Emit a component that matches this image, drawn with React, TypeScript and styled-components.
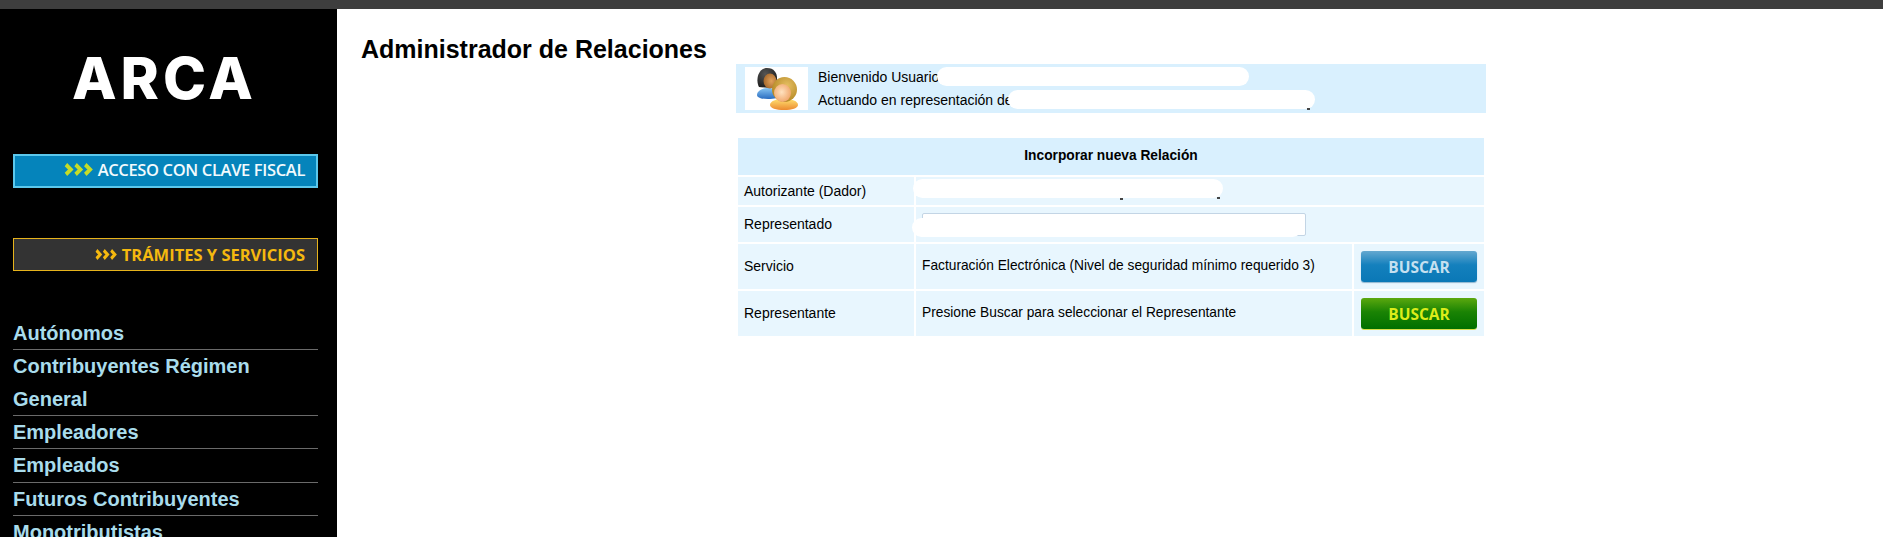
import React from "react"
import styled, { createGlobalStyle } from "styled-components"

const GlobalStyle = createGlobalStyle`
  html, body {
    margin: 0;
    height: 100%;
    overflow: hidden;
    background: #fff;
    font-family: "Liberation Sans", Arial, sans-serif;
  }
`

const Page = styled.div`
  height: 537px;
  display: flex;
  flex-direction: column;
  overflow: hidden;
`

const TopBar = styled.div`
  height: 9px;
  flex: none;
  background: #3e3e3e;
`

const Body = styled.div`
  flex: 1;
  min-height: 0;
  display: flex;
`

const Sidebar = styled.aside`
  width: 337px;
  flex: none;
  box-sizing: border-box;
  padding: 0 19px 0 13px;
  background: #000;
  overflow: hidden;
`

const Logo = styled.div`
  height: 145px;
  box-sizing: border-box;
  padding: 37px 2px 0 0;
  text-align: center;
  color: #fff;
  font-family: Inter, sans-serif;
  font-weight: 800;
  font-size: 58px;
  line-height: 64px;
  letter-spacing: 4px;
`

const SideButton = styled.a<{ $variant: "blue" | "dark" }>`
  display: flex;
  align-items: center;
  justify-content: flex-end;
  box-sizing: border-box;
  height: ${({ $variant }) => ($variant === "blue" ? "34px" : "33px")};
  font-family: "Open Sans", sans-serif;
  white-space: nowrap;
  ${({ $variant }) =>
    $variant === "blue"
      ? `
    gap: 5px;
    padding: 0 11px 3px 0;
    font-weight: 600;
    font-size: 16.5px;
    letter-spacing: -0.35px;
    border: 2px solid #5cc8ec;
    background: #0584bb;
    color: #f2fafd;
    margin-bottom: 50px;
  `
      : `
    gap: 5px;
    padding: 0 12px 0 0;
    font-weight: 700;
    font-size: 16.5px;
    letter-spacing: 0;
    border: 1px solid #e6b31c;
    background: #333333;
    color: #f5b90f;
  `}
`

const Chevrons = styled.svg`
  flex: none;
`

const Menu = styled.ul`
  list-style: none;
  margin: 46px 0 0;
  padding: 0;
`

const MenuItem = styled.li`
  border-bottom: 1px solid #6a6a6a;
  color: #a9dcec;
  font-weight: 700;
  font-size: 20px;
  line-height: 32.33px;
`

const Main = styled.main`
  flex: 1;
  min-width: 0;
  display: flex;
  flex-direction: column;
`

const Title = styled.h1`
  margin: 26px 0 0 24px;
  height: 29px;
  color: #000;
  font-size: 25px;
  line-height: 29px;
  font-weight: 700;
`

const Content = styled.div`
  width: 750px;
  align-self: center;
  margin-left: 2px;
`

const Welcome = styled.div`
  display: flex;
  align-items: center;
  height: 49px;
  padding-left: 9px;
  background: #d9f0fe;
`

const IconBox = styled.div`
  width: 63px;
  height: 43px;
  flex: none;
  background: #fff;
  display: flex;
`

const WelcomeText = styled.div`
  margin-left: 10px;
  color: #000;
  font-size: 14px;
  line-height: 24px;
`

const WelcomeLine = styled.div`
  position: relative;
  white-space: nowrap;

  & + & {
    margin-top: -1px;
  }
`

const Redaction = styled.span<{ $left: number; $top: number; $width: number }>`
  position: absolute;
  left: ${({ $left }) => $left}px;
  top: ${({ $top }) => $top}px;
  width: ${({ $width }) => $width}px;
  height: 19px;
  border-radius: 10px;
  background: #fff;
`

const Residue = styled.span<{ $left: number; $top: number }>`
  position: absolute;
  left: ${({ $left }) => $left}px;
  top: ${({ $top }) => $top}px;
  width: 3px;
  height: 2px;
  background: #444;
`

const Table = styled.table`
  width: 750px;
  margin-top: 23px;
  border-collapse: separate;
  border-spacing: 2px;
  table-layout: fixed;
  color: #000;
  font-size: 14px;
`

const HeaderCell = styled.th`
  height: 37px;
  padding: 0 0 2px;
  box-sizing: border-box;
  background: #d9f0fe;
  font-size: 13.75px;
  font-weight: 700;
  text-align: center;
`

const Cell = styled.td<{ $height: number; $value?: boolean }>`
  position: relative;
  height: ${({ $height }) => $height}px;
  padding: 0 0 ${({ $height }) => ($height > 28 ? "2px" : "0")} 6px;
  box-sizing: border-box;
  background: #e8f6fe;
  white-space: nowrap;
  font-size: ${({ $value }) => ($value ? "13.75px" : "14px")};
`

const ButtonCell = styled.td`
  padding: 0;
  background: #e8f6fe;
  text-align: center;
`

const LookupInput = styled.div`
  position: absolute;
  left: 6px;
  top: 6px;
  box-sizing: border-box;
  width: 384px;
  height: 23px;
  border: 1px solid #c3d5e5;
  border-radius: 2px;
  background: #fff;
`

const SearchButton = styled.button<{ $variant: "blue" | "green" }>`
  display: block;
  width: 116px;
  height: 31px;
  margin: 0 auto;
  padding: 0;
  border: 0;
  border-radius: 3px;
  font-family: "Open Sans", sans-serif;
  font-weight: 700;
  font-size: 15.5px;
  letter-spacing: 0;
  color: ${({ $variant }) => ($variant === "blue" ? "#c6e0f0" : "#dcec1a")};
  background: ${({ $variant }) =>
    $variant === "blue"
      ? "linear-gradient(#64a8d0, #1480bd 45%, #0a78b6)"
      : "linear-gradient(#5ba80e, #1a8304 45%, #006f00)"};
  box-shadow: ${({ $variant }) => ($variant === "blue" ? "0 1px 1px #8fb6cf" : "0 1px 0 #d7e04a")};
`

const menuItems = [
  "Autónomos",
  "Contribuyentes Régimen General",
  "Empleadores",
  "Empleados",
  "Futuros Contribuyentes",
  "Monotributistas",
]

const UsersIcon = () => (
  <svg width="63" height="43" viewBox="0 0 63 43">
    <defs>
      <radialGradient id="faceBack" cx="0.6" cy="0.5" r="0.6">
        <stop offset="0" stopColor="#e2a25c" />
        <stop offset="1" stopColor="#a5682c" />
      </radialGradient>
      <radialGradient id="faceFront" cx="0.45" cy="0.45" r="0.6">
        <stop offset="0" stopColor="#ffe2c0" />
        <stop offset="1" stopColor="#f0a468" />
      </radialGradient>
      <linearGradient id="shirtBlue" x1="0" y1="0" x2="0" y2="1">
        <stop offset="0" stopColor="#86c4f2" />
        <stop offset="1" stopColor="#2a6cc0" />
      </linearGradient>
      <linearGradient id="shirtOrange" x1="0" y1="0" x2="0" y2="1">
        <stop offset="0" stopColor="#ffe070" />
        <stop offset="1" stopColor="#ec8a30" />
      </linearGradient>
      <radialGradient id="hairBlond" cx="0.6" cy="0.35" r="0.7">
        <stop offset="0" stopColor="#e6bf62" />
        <stop offset="1" stopColor="#b08420" />
      </radialGradient>
      <radialGradient id="hairDark" cx="0.4" cy="0.3" r="0.7">
        <stop offset="0" stopColor="#555" />
        <stop offset="1" stopColor="#1e1e1e" />
      </radialGradient>
    </defs>
    <path d="M12 28c0-4 5-7 11-7s12 2 12 6c0 4-6 5-12 5-6 0-11-1-11-4z" fill="url(#shirtBlue)" />
    <path d="M14 20C10 12 14 1 22 1c7 0 10 5 10 10 0 5-3 10-6 10z" fill="url(#hairDark)" />
    <ellipse cx="25" cy="14" rx="6.5" ry="7.5" fill="url(#faceBack)" />
    <path d="M25 38c0-4 6-6 14-6s14 2 14 6c0 3-6 5-14 5s-14-2-14-5z" fill="url(#shirtOrange)" />
    <ellipse cx="39.5" cy="22.5" rx="12.5" ry="12.5" fill="url(#hairBlond)" />
    <ellipse cx="37.5" cy="26" rx="8.5" ry="9" fill="url(#faceFront)" />
  </svg>
)

const SideChevrons = ({ color, width, height }: { color: string; width: number; height: number }) => (
  <Chevrons width={width} height={height} viewBox="0 0 30 12" preserveAspectRatio="none">
    <g fill="none" stroke={color} strokeWidth="3.8">
      <path d="M2 1.5 7 6l-5 4.5" />
      <path d="M12 1.5 17 6l-5 4.5" />
      <path d="M22 1.5 27 6l-5 4.5" />
    </g>
  </Chevrons>
)

const App = () => (
  <Page>
    <GlobalStyle />
    <TopBar />
    <Body>
      <Sidebar>
        <Logo>ARCA</Logo>
        <SideButton $variant="blue">
          <SideChevrons color="#c5dc28" width={29} height={13} />
          ACCESO CON CLAVE FISCAL
        </SideButton>
        <SideButton $variant="dark">
          <SideChevrons color="#f5b90f" width={22} height={11} />
          TRÁMITES Y SERVICIOS
        </SideButton>
        <Menu>
          {menuItems.map((item) => (
            <MenuItem key={item}>{item}</MenuItem>
          ))}
        </Menu>
      </Sidebar>
      <Main>
        <Title>Administrador de Relaciones</Title>
        <Content>
          <Welcome>
            <IconBox>
              <UsersIcon />
            </IconBox>
            <WelcomeText>
              <WelcomeLine>
                Bienvenido Usuario
                <Redaction $left={119} $top={2} $width={312} />
              </WelcomeLine>
              <WelcomeLine>
                Actuando en representación de
                <Redaction $left={190} $top={2} $width={307} />
                <Residue $left={489} $top={20} />
              </WelcomeLine>
            </WelcomeText>
          </Welcome>
          <Table>
            <colgroup>
              <col style={{ width: 176 }} />
              <col />
              <col style={{ width: 130 }} />
            </colgroup>
            <thead>
              <tr>
                <HeaderCell colSpan={3}>Incorporar nueva Relación</HeaderCell>
              </tr>
            </thead>
            <tbody>
              <tr>
                <Cell $height={28}>Autorizante (Dador)</Cell>
                <Cell $height={28} colSpan={2}>
                  <Redaction $left={-3} $top={2} $width={310} />
                  <Residue $left={204} $top={21} />
                  <Residue $left={301} $top={20} />
                </Cell>
              </tr>
              <tr>
                <Cell $height={35}>Representado</Cell>
                <Cell $height={35} colSpan={2}>
                  <LookupInput />
                  <Redaction $left={-4} $top={11} $width={390} />
                </Cell>
              </tr>
              <tr>
                <Cell $height={45}>Servicio</Cell>
                <Cell $height={45} $value>
                  Facturación Electrónica (Nivel de seguridad mínimo requerido 3)
                </Cell>
                <ButtonCell>
                  <SearchButton $variant="blue">BUSCAR</SearchButton>
                </ButtonCell>
              </tr>
              <tr>
                <Cell $height={45}>Representante</Cell>
                <Cell $height={45} $value>
                  Presione Buscar para seleccionar el Representante
                </Cell>
                <ButtonCell>
                  <SearchButton $variant="green">BUSCAR</SearchButton>
                </ButtonCell>
              </tr>
            </tbody>
          </Table>
        </Content>
      </Main>
    </Body>
  </Page>
)

export default App
